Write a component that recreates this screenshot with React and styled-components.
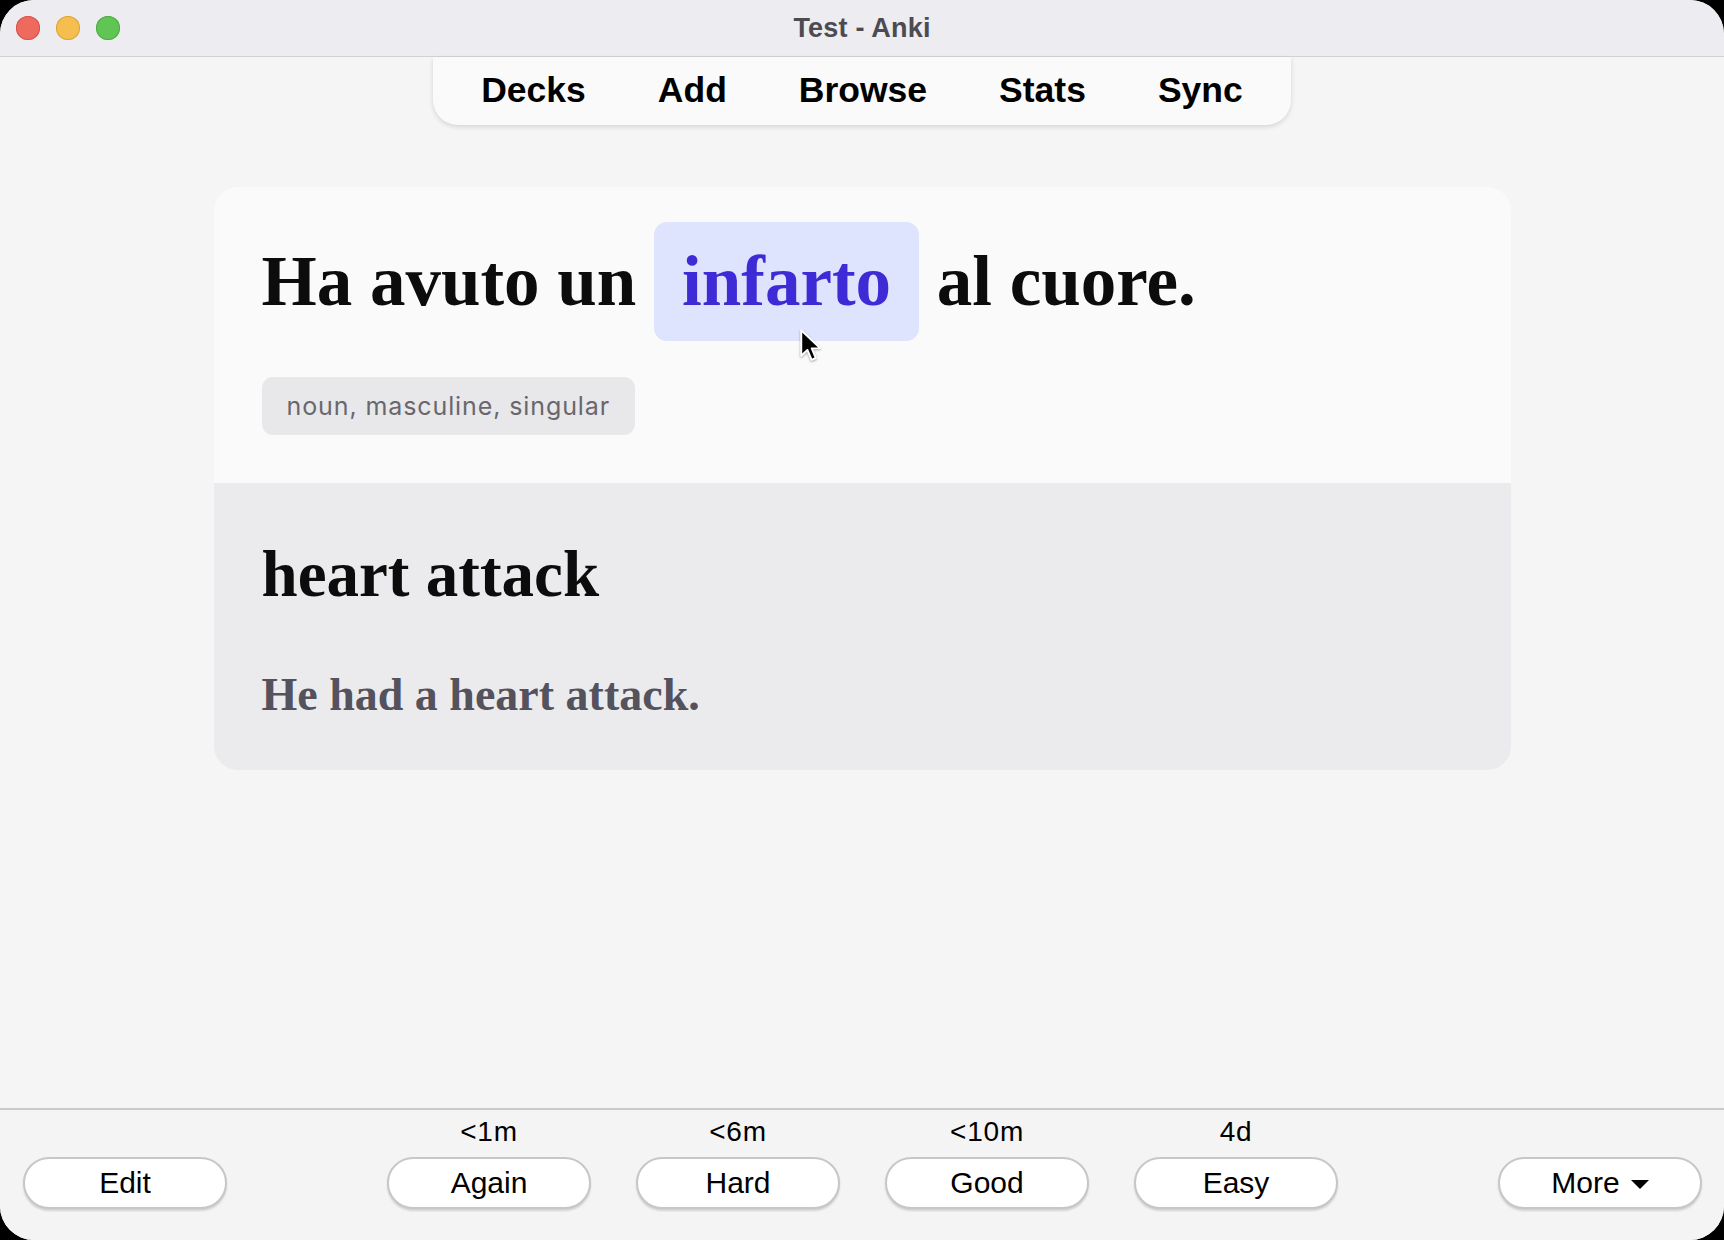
import React from "react";
import styled, { createGlobalStyle } from "styled-components";

const GlobalStyle = createGlobalStyle`
  html, body {
    margin: 0;
    padding: 0;
    background: #000;
  }
  body {
    font-family: "Liberation Sans", Arial, sans-serif;
  }
  * { box-sizing: border-box; }
`;

const Window = styled.div`
  width: 1724px;
  height: 1240px;
  border-radius: 34px;
  overflow: hidden;
  background: #f5f5f5;
  display: flex;
  flex-direction: column;
`;

const TitleBar = styled.div`
  height: 57px;
  flex: none;
  background: #ececf1;
  border-bottom: 1px solid #d2d2d5;
  display: grid;
  grid-template-columns: 1fr auto 1fr;
  align-items: center;
  padding: 0 16px;
`;

const Lights = styled.div`
  display: flex;
  gap: 16px;
`;

const Light = styled.span`
  width: 24px;
  height: 24px;
  border-radius: 50%;
  background: ${(p) => p.$color};
  box-shadow: inset 0 0 0 1px ${(p) => p.$edge};
`;

const Title = styled.div`
  font-family: "Liberation Sans", Arial, sans-serif;
  font-weight: 700;
  font-size: 27px;
  color: #4b4b50;
  letter-spacing: 0.2px;
`;

const Main = styled.div`
  flex: 1;
  display: flex;
  flex-direction: column;
  align-items: center;
`;

const Toolbar = styled.nav`
  height: 68px;
  display: flex;
  align-items: center;
  gap: 72px;
  padding: 0 48px 1px;
  background: #fafafa;
  border-radius: 0 0 25px 25px;
  box-shadow: 0 2px 5px rgba(0, 0, 0, 0.13);
`;

const NavItem = styled.span`
  font-family: "Liberation Sans", Arial, sans-serif;
  font-weight: 700;
  font-size: 35.5px;
  color: #000;
`;

const Card = styled.div`
  width: 1297px;
  margin-top: 62px;
  border-radius: 24px;
  overflow: hidden;
`;

const Front = styled.div`
  position: relative;
  background: #fafafa;
  padding: 35px 48px 48px;
  display: flex;
  flex-direction: column;
  align-items: flex-start;
  gap: 36px;
`;

const Sentence = styled.div`
  font-family: "Liberation Serif", "Times New Roman", serif;
  font-weight: 700;
  font-size: 71px;
  color: #0c0c0d;
`;

const Highlight = styled.span`
  display: inline-block;
  padding: 19px 28px 19px 28px;
  border-radius: 13px;
  background: #dfe4fe;
  color: #3f2bd6;
`;

const Tag = styled.div`
  height: 58px;
  line-height: 58px;
  padding: 0 25px;
  border-radius: 11px;
  background: #e8e8ea;
  color: #68676d;
  font-family: Inter, "Noto Sans", sans-serif;
  font-size: 25px;
  letter-spacing: 0.9px;
`;

const Cursor = styled.svg`
  position: absolute;
  left: 585px;
  top: 141px;
  width: 24px;
  height: 36px;
  filter: drop-shadow(0 1px 1px rgba(0, 0, 0, 0.35));
`;

const Back = styled.div`
  background: #ebebed;
  padding: 55px 48px 49px;
  display: flex;
  flex-direction: column;
  gap: 59px;
`;

const Word = styled.div`
  font-family: "Liberation Serif", "Times New Roman", serif;
  font-weight: 700;
  font-size: 65px;
  line-height: 72px;
  color: #0c0c0d;
`;

const Example = styled.div`
  font-family: "Liberation Serif", "Times New Roman", serif;
  font-weight: 700;
  font-size: 46px;
  line-height: 52px;
  color: #53525d;
`;

const BottomBar = styled.div`
  height: 132px;
  flex: none;
  border-top: 2px solid #cacaca;
  background: #f4f4f4;
  padding: 7px 22px 0 23px;
  display: flex;
  justify-content: space-between;
  align-items: flex-start;
`;

const Side = styled.div`
  padding-top: 40px;
`;

const AnswerGroup = styled.div`
  display: flex;
  gap: 45px;
`;

const AnswerCol = styled.div`
  display: flex;
  flex-direction: column;
  align-items: center;
  gap: 10px;
`;

const Interval = styled.div`
  height: 30px;
  line-height: 30px;
  font-family: "Liberation Sans", Arial, sans-serif;
  font-size: 28px;
  letter-spacing: 0.8px;
  color: #000;
`;

const Button = styled.button`
  width: 204px;
  height: 52px;
  border-radius: 26px;
  border: 2px solid #c7c7c7;
  background: #fff;
  box-shadow: 0 2px 2px rgba(0, 0, 0, 0.14);
  font-family: "Liberation Sans", Arial, sans-serif;
  font-size: 30px;
  color: #000;
  display: flex;
  align-items: center;
  justify-content: center;
  gap: 11px;
  padding: 0;
`;

const Caret = styled.svg`
  width: 18px;
  height: 9px;
  margin-top: 3px;
`;

const answers = [
  { label: "Again", time: "<1m" },
  { label: "Hard", time: "<6m" },
  { label: "Good", time: "<10m" },
  { label: "Easy", time: "4d" },
];

export default function App() {
  return (
    <>
      <GlobalStyle />
      <Window>
        <TitleBar>
          <Lights>
            <Light $color="#ee6a5f" $edge="#d9534a" />
            <Light $color="#f5be4f" $edge="#dca53b" />
            <Light $color="#61c555" $edge="#4dad43" />
          </Lights>
          <Title>Test - Anki</Title>
          <div />
        </TitleBar>
        <Main>
          <Toolbar>
            <NavItem>Decks</NavItem>
            <NavItem>Add</NavItem>
            <NavItem>Browse</NavItem>
            <NavItem>Stats</NavItem>
            <NavItem>Sync</NavItem>
          </Toolbar>
          <Card>
            <Front>
              <Sentence>
                Ha avuto un <Highlight>infarto</Highlight> al cuore.
              </Sentence>
              <Tag>noun, masculine, singular</Tag>
              <Cursor viewBox="0 0 16 24">
                <path
                  d="M1.5 1.5 L1.5 18.5 L5.6 14.6 L8.4 21.2 L11.2 20 L8.5 13.6 L14 13.4 Z"
                  fill="#000"
                  stroke="#fff"
                  strokeWidth="1.3"
                  strokeLinejoin="round"
                />
              </Cursor>
            </Front>
            <Back>
              <Word>heart attack</Word>
              <Example>He had a heart attack.</Example>
            </Back>
          </Card>
        </Main>
        <BottomBar>
          <Side>
            <Button>Edit</Button>
          </Side>
          <AnswerGroup>
            {answers.map((a) => (
              <AnswerCol key={a.label}>
                <Interval>{a.time}</Interval>
                <Button>{a.label}</Button>
              </AnswerCol>
            ))}
          </AnswerGroup>
          <Side>
            <Button>
              More
              <Caret viewBox="0 0 18 9">
                <path d="M0 0 L18 0 L9 9 Z" fill="#000" />
              </Caret>
            </Button>
          </Side>
        </BottomBar>
      </Window>
    </>
  );
}
